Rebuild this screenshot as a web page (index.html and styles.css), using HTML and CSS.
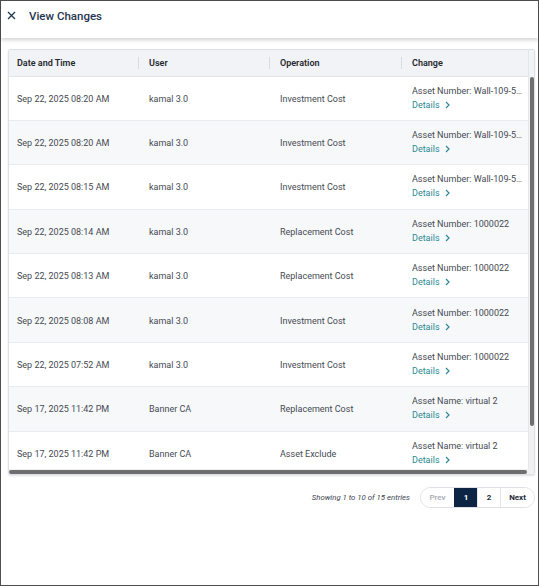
FILE: index.html
```html
<!DOCTYPE html>
<html lang="en">
<head>
    <meta charset="UTF-8">
    <meta name="viewport" content="width=device-width, initial-scale=1.0">
    <title>View Changes</title>
    <link rel="stylesheet" href="styles.css">
</head>
<body>
    <div class="modal">
        <div class="modal-header">
            <button class="close-btn" aria-label="Close">
                <svg width="9" height="9" viewBox="0 0 9 9"><path d="M1 1L8 8M8 1L1 8" stroke="#1f3550" stroke-width="1.3" fill="none"/></svg>
            </button>
            <h1 class="modal-title">View Changes</h1>
        </div>

        <div class="modal-body">
            <div class="table-card">
                <div class="table-scroll">
                    <table class="changes-table">
                        <colgroup>
                            <col style="width:130px">
                            <col style="width:131px">
                            <col style="width:132px">
                            <col style="width:126px">
                        </colgroup>
                        <thead>
                            <tr>
                                <th>Date and Time</th>
                                <th>User</th>
                                <th>Operation</th>
                                <th>Change</th>
                            </tr>
                        </thead>
                        <tbody>
                            <tr>
                                <td>Sep 22, 2025 08:20 AM</td>
                                <td>kamal 3.0</td>
                                <td>Investment Cost</td>
                                <td><div class="change-text">Asset Number: Wall-109-5WM-A</div><a class="details" href="#">Details <svg class="chev" width="5" height="8" viewBox="0 0 5 8"><path d="M1 1L4 4L1 7" stroke="#2b8a93" stroke-width="1.2" fill="none"/></svg></a></td>
                            </tr>
                            <tr>
                                <td>Sep 22, 2025 08:20 AM</td>
                                <td>kamal 3.0</td>
                                <td>Investment Cost</td>
                                <td><div class="change-text">Asset Number: Wall-109-5WM-B</div><a class="details" href="#">Details <svg class="chev" width="5" height="8" viewBox="0 0 5 8"><path d="M1 1L4 4L1 7" stroke="#2b8a93" stroke-width="1.2" fill="none"/></svg></a></td>
                            </tr>
                            <tr>
                                <td>Sep 22, 2025 08:15 AM</td>
                                <td>kamal 3.0</td>
                                <td>Investment Cost</td>
                                <td><div class="change-text">Asset Number: Wall-109-5WM-C</div><a class="details" href="#">Details <svg class="chev" width="5" height="8" viewBox="0 0 5 8"><path d="M1 1L4 4L1 7" stroke="#2b8a93" stroke-width="1.2" fill="none"/></svg></a></td>
                            </tr>
                            <tr>
                                <td>Sep 22, 2025 08:14 AM</td>
                                <td>kamal 3.0</td>
                                <td>Replacement Cost</td>
                                <td><div class="change-text">Asset Number: 1000022</div><a class="details" href="#">Details <svg class="chev" width="5" height="8" viewBox="0 0 5 8"><path d="M1 1L4 4L1 7" stroke="#2b8a93" stroke-width="1.2" fill="none"/></svg></a></td>
                            </tr>
                            <tr>
                                <td>Sep 22, 2025 08:13 AM</td>
                                <td>kamal 3.0</td>
                                <td>Replacement Cost</td>
                                <td><div class="change-text">Asset Number: 1000022</div><a class="details" href="#">Details <svg class="chev" width="5" height="8" viewBox="0 0 5 8"><path d="M1 1L4 4L1 7" stroke="#2b8a93" stroke-width="1.2" fill="none"/></svg></a></td>
                            </tr>
                            <tr>
                                <td>Sep 22, 2025 08:08 AM</td>
                                <td>kamal 3.0</td>
                                <td>Investment Cost</td>
                                <td><div class="change-text">Asset Number: 1000022</div><a class="details" href="#">Details <svg class="chev" width="5" height="8" viewBox="0 0 5 8"><path d="M1 1L4 4L1 7" stroke="#2b8a93" stroke-width="1.2" fill="none"/></svg></a></td>
                            </tr>
                            <tr>
                                <td>Sep 22, 2025 07:52 AM</td>
                                <td>kamal 3.0</td>
                                <td>Investment Cost</td>
                                <td><div class="change-text">Asset Number: 1000022</div><a class="details" href="#">Details <svg class="chev" width="5" height="8" viewBox="0 0 5 8"><path d="M1 1L4 4L1 7" stroke="#2b8a93" stroke-width="1.2" fill="none"/></svg></a></td>
                            </tr>
                            <tr>
                                <td>Sep 17, 2025 11:42 PM</td>
                                <td>Banner CA</td>
                                <td>Replacement Cost</td>
                                <td><div class="change-text">Asset Name: virtual 2</div><a class="details" href="#">Details <svg class="chev" width="5" height="8" viewBox="0 0 5 8"><path d="M1 1L4 4L1 7" stroke="#2b8a93" stroke-width="1.2" fill="none"/></svg></a></td>
                            </tr>
                            <tr>
                                <td>Sep 17, 2025 11:42 PM</td>
                                <td>Banner CA</td>
                                <td>Asset Exclude</td>
                                <td><div class="change-text">Asset Name: virtual 2</div><a class="details" href="#">Details <svg class="chev" width="5" height="8" viewBox="0 0 5 8"><path d="M1 1L4 4L1 7" stroke="#2b8a93" stroke-width="1.2" fill="none"/></svg></a></td>
                            </tr>
                            <tr>
                                <td>Sep 17, 2025 11:40 PM</td>
                                <td>Banner CA</td>
                                <td>Asset Include</td>
                                <td><div class="change-text">Asset Name: virtual 2</div><a class="details" href="#">Details <svg class="chev" width="5" height="8" viewBox="0 0 5 8"><path d="M1 1L4 4L1 7" stroke="#2b8a93" stroke-width="1.2" fill="none"/></svg></a></td>
                            </tr>
                        </tbody>
                    </table>
                </div>

                <!-- scrollbars of the table area -->
                <div class="vbar">
                    <div class="vbar-head"></div>
                    <div class="vbar-thumb"></div>
                </div>
                <div class="hbar">
                    <div class="hbar-thumb"></div>
                </div>
            </div>

            <div class="table-footer">
                <span class="entries-info">Showing 1 to 10 of 15 entries</span>
                <div class="pager">
                    <button class="page-btn prev" disabled>Prev</button>
                    <button class="page-btn current">1</button>
                    <button class="page-btn">2</button>
                    <button class="page-btn next">Next</button>
                </div>
            </div>
        </div>
    </div>
</body>
</html>
```

FILE: styles.css
```css
* {
    box-sizing: border-box;
    margin: 0;
    padding: 0;
}

body {
    font-family: Roboto, "Liberation Sans", sans-serif;
    background-color: #ffffff;
    color: #454a52;
}

.modal {
    width: 539px;
    height: 586px;
    border: 1px solid #4f4f4f;
    display: flex;
    flex-direction: column;
    background-color: #ffffff;
}

.modal-header {
    height: 37px;
    flex-shrink: 0;
    display: flex;
    align-items: center;
    padding: 0 0 8px 6px;
    gap: 13px;
    box-shadow: 0 2px 4px rgba(0, 0, 0, 0.18);
    position: relative;
    z-index: 1;
}

.close-btn {
    border: none;
    background: none;
    display: flex;
    align-items: center;
    cursor: pointer;
}

.modal-title {
    font-size: 11.5px;
    font-weight: 500;
    color: #1f3550;
}

.modal-body {
    padding: 11px 3px 0 7px;
}

.table-card {
    border: 1px solid #dde1e6;
    border-radius: 2px;
    box-shadow: 0 1px 2px rgba(0, 0, 0, 0.12);
    display: grid;
    grid-template-columns: 1fr 6px;
    grid-template-rows: 419px 5px;
}

.table-scroll {
    overflow: hidden;
}

.vbar {
    display: flex;
    flex-direction: column;
    background-color: #f1f1f1;
    border-left: 1px solid #e6e6e6;
}

.vbar-head {
    height: 27px;
    background-color: #f1f3f6;
}

.vbar-thumb {
    height: 349px;
    margin-left: 1px;
    background-color: #6e6e6e;
    border-radius: 3px;
}

.hbar {
    grid-column: 1 / 3;
    background-color: #f1f1f1;
    display: flex;
    align-items: center;
}

.hbar-thumb {
    width: 518px;
    height: 4px;
    background-color: #6e6e6e;
    border-radius: 2px;
}

.changes-table {
    width: 519px;
    border-collapse: collapse;
    table-layout: fixed;
    font-size: 9px;
}

.changes-table th {
    height: 26px;
    text-align: left;
    font-weight: 600;
    color: #25282c;
    background: linear-gradient(#d8dce2, #d8dce2) no-repeat right center / 1px 12px, #f1f3f6;
    padding: 0 10px;
    border-bottom: 1px solid #e1e4e9;
}

.changes-table th:first-child,
.changes-table td:first-child {
    padding-left: 8px;
}

.changes-table th:last-child {
    background: #f1f3f6;
}

.changes-table td {
    height: 44.4px;
    padding: 1px 10px 0;
    border-bottom: 1px solid #e8ebef;
    vertical-align: middle;
    white-space: nowrap;
}

.changes-table td:last-child {
    padding: 1px 4px 0 10px;
}

.changes-table tbody tr:nth-child(even) td {
    background-color: #f7f8fa;
}

.change-text {
    overflow: hidden;
    text-overflow: ellipsis;
    white-space: nowrap;
    line-height: 14px;
    margin-top: -2px;
}

.details {
    display: inline-flex;
    align-items: center;
    gap: 5px;
    color: #2b8a93;
    text-decoration: none;
    line-height: 14px;
}

.table-footer {
    display: flex;
    justify-content: flex-end;
    align-items: center;
    gap: 10px;
    margin-top: 12px;
}

.entries-info {
    font-size: 7.8px;
    font-style: italic;
    color: #3d4450;
}

.pager {
    display: flex;
    height: 21px;
    border: 1px solid #dde1e6;
    border-radius: 11px;
    overflow: hidden;
}

.page-btn {
    font-family: Roboto, "Liberation Sans", sans-serif;
    font-size: 8px;
    font-weight: 700;
    color: #1f2a3a;
    background-color: #ffffff;
    border: none;
    border-left: 1px solid #e3e6ea;
    width: 23px;
    cursor: pointer;
}

.page-btn.prev {
    border-left: none;
    width: 33px;
    color: #a3a8b0;
    font-weight: 500;
}

.page-btn.next {
    width: 34px;
}

.page-btn.current {
    background-color: #0c2545;
    color: #ffffff;
    border-left-color: #0c2545;
}
```
